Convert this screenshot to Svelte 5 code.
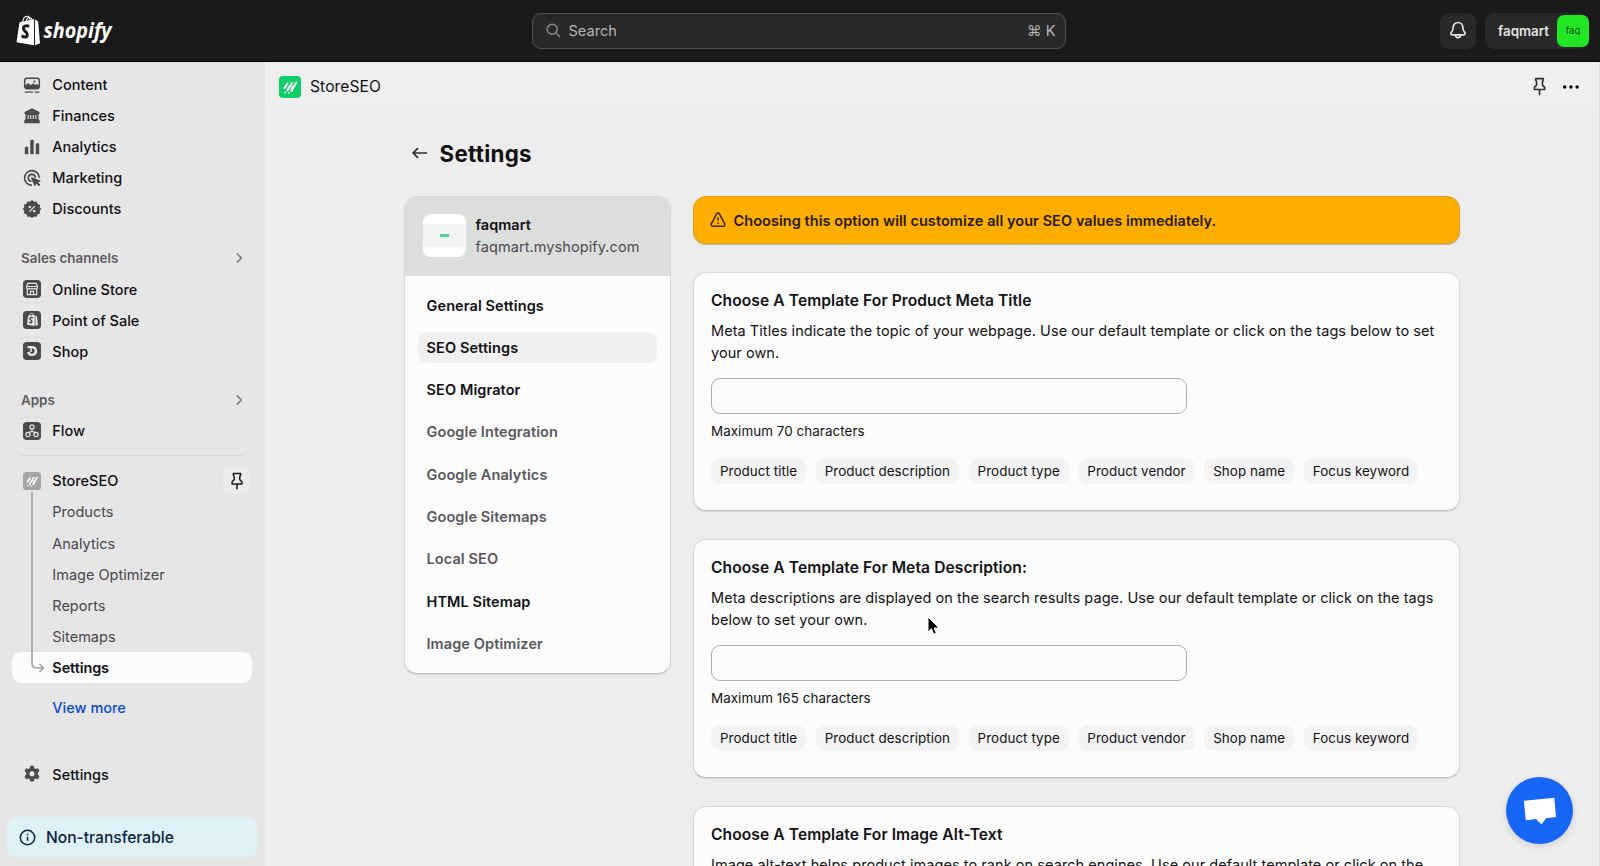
<script>
const icons = {
	content: '<rect x="1" y="1.7" width="18" height="12.800" rx="3" fill="none" stroke="currentColor" stroke-width="1.700"/><path d="M1 10.500l4.200-2.600 3 2.200 3.300-2.200 2.400 2 1.600-1 3.600 1.600v1.300a2.700 2.700 0 0 1-2.700 2.700H3.700A2.700 2.700 0 0 1 1 11.800z"/><circle cx="13" cy="5.800" r="1.300"/><path d="M1 18.700h10.500M13.500 18.700h5.500" stroke="currentColor" stroke-width="1.600"/>',
	finances: '<path d="M10 .5l8.500 4.300c1.500.800 1.100 3.200-.500 3.200v6.300c.700.300 1.500 1 1.500 2.200v2.300H.5v-2.300c0-1.200.8-1.900 1.500-2.200V8C.4 8 0 5.600 1.500 4.800z"/><path d="M5.300 8.800v5M8.400 8.800v5M11.600 8.800v5M14.700 8.800v5" stroke="#e6e6e6" stroke-width="1.300"/>',
	analytics: '<rect x="1.200" y="9.600" width="4.200" height="9.400" rx="1.500"/><rect x="7.900" y="1" width="4.200" height="18" rx="1.500"/><rect x="14.600" y="5.300" width="4.200" height="13.700" rx="1.500"/>',
	marketing: '<path d="M9 18.700A8.900 8.900 0 1 1 18.700 9M8.700 14A4.300 4.300 0 1 1 14 9" fill="none" stroke="currentColor" stroke-width="2" stroke-linecap="round"/><path d="M9.700 9.200l10.400 3.800c.6.300.5 1-.1 1.200l-2.700.9 2.900 3.100-1.900 1.800-3.100-3-1.200 2.600c-.3.600-1 .5-1.200-.1L8.900 10.100c-.2-.6.300-1.100.8-.9z"/>',
	discounts: '<path d="M10-.9l2.500 2 3.200-.3 1.100 3 3 1.100-.3 3.200L21.300 10l-1.800 2.200.3 3.200-3 1.100-1.100 3-3.200-.3L10 21l-2.500-1.800-3.200.3-1.100-3-3-1.100.3-3.200L-1.300 10l1.800-2-.3-3.200 3-1.100 1.100-3 3.200.3z"/><path d="M6.500 13.500l7-7" stroke="#e6e6e6" stroke-width="1.600"/><circle cx="7.300" cy="7.500" r="1.500" fill="#e6e6e6"/><circle cx="12.700" cy="12.500" r="1.500" fill="#e6e6e6"/>',
	store: '<rect x="-1" y="-1" width="22" height="22" rx="4.600"/><path d="M4.700 3.200h10.600l1.400 4.200v.9a1.900 1.900 0 0 1-3.400.9 2.100 2.100 0 0 1-3.300 0 2.100 2.100 0 0 1-3.300 0 1.900 1.900 0 0 1-3.400-.9v-.9zM3.500 6.900h13M4.200 10.300v6.500h11.600v-6.500M8.100 16.800v-3.900h3.800v3.900" fill="none" stroke="#e6e6e6" stroke-width="1.400"/>',
	pos: '<rect x="-1" y="-1" width="22" height="22" rx="4.600"/><path d="M5.200 5.200l8.100-1.700v13.700L3.900 15.700zM14.200 4.500l1.900.9 1.200 10.600-3.100 1z" fill="#e6e6e6"/><path d="M7 5.200c.4-4 4-4.600 4.600-.8" fill="none" stroke="#e6e6e6" stroke-width="1.100"/><path d="M11.200 7.300c-2.200-1-3.900 0-3.700 1.500.2 1.400 2.400 1.500 2.300 3.200-.1 1.600-2 1.700-3.300.7" fill="none" stroke="#4a4a4d" stroke-width="1.700"/>',
	shop: '<rect x="-1" y="-1" width="22" height="22" rx="4.600"/><path d="M4.500 5.300h5.800a4.700 4.700 0 1 1-4.800 5.800" fill="none" stroke="#e6e6e6" stroke-width="2.900"/><path d="M8.800 6.500v4.700" stroke="#e6e6e6" stroke-width="2"/>',
	flow: '<rect x="-1" y="-1" width="22" height="22" rx="4.600"/><g fill="none" stroke="#e6e6e6" stroke-width="1.500"><circle cx="10" cy="5" r="2.500"/><circle cx="5.100" cy="14.300" r="2.600"/><circle cx="14.900" cy="14.300" r="2.600"/><path d="M10 7.500v3.200M6 11.900c1.500-1.700 6.500-1.700 8 0"/></g>',
	gear: '<path fill-rule="evenodd" d="M8 0h4l.7 2.900 1.600.9 2.900-.9 2 3.500L17 8.500v2.200l2.200 2.100-2 3.500-2.900-.8-1.600.9L12 19.300H8l-.7-2.900-1.600-.9-2.900.8-2-3.500L3 10.700V8.500L.8 6.400l2-3.500 2.900.9 1.600-.9zM10 6.500a3.100 3.100 0 1 0 0 6.200 3.100 3.100 0 0 0 0-6.200z"/>',
	pin: '<path d="M6 1.800h8v1.300l-.9 2.100v3.400l2.300 2.300v2.300H4.600v-2.300l2.300-2.300V5.200L6 3.100zM10 13.500v5" fill="none" stroke="currentColor" stroke-width="1.700" stroke-linejoin="round" stroke-linecap="round"/>'
}

const main = [
	{ icon: 'content', label: 'Content' },
	{ icon: 'finances', label: 'Finances' },
	{ icon: 'analytics', label: 'Analytics' },
	{ icon: 'marketing', label: 'Marketing' },
	{ icon: 'discounts', label: 'Discounts' }
]

const channels = [
	{ icon: 'store', label: 'Online Store' },
	{ icon: 'pos', label: 'Point of Sale' },
	{ icon: 'shop', label: 'Shop' }
]

const subItems = ['Products', 'Analytics', 'Image Optimizer', 'Reports', 'Sitemaps']

const menu = [
	{ label: 'General Settings' },
	{ label: 'SEO Settings', active: true },
	{ label: 'SEO Migrator' },
	{ label: 'Google Integration', muted: true },
	{ label: 'Google Analytics', muted: true },
	{ label: 'Google Sitemaps', muted: true },
	{ label: 'Local SEO', muted: true },
	{ label: 'HTML Sitemap' },
	{ label: 'Image Optimizer', muted: true }
]

const tags = ['Product title', 'Product description', 'Product type', 'Product vendor', 'Shop name', 'Focus keyword']

const templates = [
	{
		title: 'Choose A Template For Product Meta Title',
		lines: ['Meta Titles indicate the topic of your webpage. Use our default template or click on the tags below to set', 'your own.'],
		max: 70
	},
	{
		title: 'Choose A Template For Meta Description:',
		lines: ['Meta descriptions are displayed on the search results page. Use our default template or click on the tags', 'below to set your own.'],
		max: 165
	},
	{
		title: 'Choose A Template For Image Alt-Text',
		lines: ['Image alt-text helps product images to rank on search engines. Use our default template or click on the']
	}
]
</script>

{#snippet navIcon(name)}
	<svg class="icon" viewBox="-1 -1 22 22" fill="currentColor">{@html icons[name]}</svg>
{/snippet}

{#snippet chevron()}
	<svg class="chevron" viewBox="0 0 8 12"><path d="M2 1.500L6.300 6 2 10.500" /></svg>
{/snippet}

{#snippet seoLogo()}
	<svg class="seo-logo" viewBox="0 0 22 22">
		<rect width="22" height="22" rx="4" fill="currentColor" />
		<g stroke="#fff" stroke-linecap="round" fill="none">
			<path d="M5.500 12L8.500 7.500M8.300 14.500L13 7M12.500 15L17.200 6.500" stroke-width="2" />
			<path d="M8.300 14.500L10 11M12.300 15L13.300 10.500" stroke-width="1.600" />
			<path d="M5.900 16.700h.1M10 17h.1" stroke-width="1.700" />
		</g>
	</svg>
{/snippet}

<div class="app">
	<header>
		<svg class="logo" width="100" height="34" viewBox="0 0 100 34">
			<path d="M3.500 8.200l14.500-3.200V31.200L.500 28.200z" fill="#fff" />
			<path d="M19 5.500l3.200 2L24 29.300 19 31.200z" fill="#fff" />
			<path d="M6.500 9C7 4.500 9 2.200 11 2.200s3 2 3 5M10 8c.500-3 2-4.500 3.500-4.500S16 5 16 7" fill="none" stroke="#fff" stroke-width="1.100" />
			<path d="M13.200 12.400c-3.400-1.500-6 .1-5.700 2.500.3 2.600 4 2.900 3.800 5.900-.2 2.900-3.300 2.700-5.600 1" fill="none" stroke="#1a1a1a" stroke-width="3" />
			<text x="27.500" y="23.500" textLength="68" lengthAdjust="spacingAndGlyphs">shopify</text>
		</svg>
		<div class="search">
			<svg width="15" height="15" viewBox="0 0 15 15"><circle cx="6.200" cy="6.200" r="5" /><path d="M10 10l4 4" /></svg>
			<span>Search</span>
			<kbd>⌘ K</kbd>
		</div>
		<div class="actions">
			<button class="bell" aria-label="Notifications">
				<svg width="18" height="19" viewBox="0 0 18 19"><path d="M9 1.500a4.800 4.800 0 0 0-4.800 4.800c0 3-.7 3.800-1.900 5.100-.9 1-.4 2.400.9 2.400h11.600c1.300 0 1.800-1.400.9-2.400-1.200-1.300-1.900-2.100-1.900-5.100A4.800 4.800 0 0 0 9 1.500zM6.600 14.300a2.400 2.400 0 0 0 4.800 0" /></svg>
			</button>
			<div class="user"><span>faqmart</span><i>faq</i></div>
		</div>
	</header>

	<div class="body">
		<nav>
			{#each main as item}
				<a class="row">{@render navIcon(item.icon)}{item.label}</a>
			{/each}
			<div class="heading sales">Sales channels {@render chevron()}</div>
			{#each channels as item}
				<a class="row">{@render navIcon(item.icon)}{item.label}</a>
			{/each}
			<div class="heading apps">Apps {@render chevron()}</div>
			<a class="row">{@render navIcon('flow')}Flow</a>
			<hr>
			<div class="tree">
				<a class="row store">{@render seoLogo()}StoreSEO <span class="pin">{@render navIcon('pin')}</span></a>
				{#each subItems as item}
					<a class="row sub">{item}</a>
				{/each}
				<a class="row sub current">Settings</a>
				<svg class="branch" width="16" height="184" viewBox="0 0 16 184"><path d="M2 0V171Q2 176 7 176H13M9.500 172L13.500 176 9.500 180" /></svg>
			</div>
			<a class="row sub more">View more</a>
			<a class="row bottom">{@render navIcon('gear')}Settings</a>
			<div class="plan">
				<svg width="17" height="17" viewBox="0 0 17 17"><circle cx="8.500" cy="8.500" r="7.200" /><path d="M8.500 7.700v4M8.500 4.700v1.500" /></svg>
				Non-transferable
			</div>
		</nav>

		<main>
			<div class="titlebar">
				{@render seoLogo()}
				<span>StoreSEO</span>
				<div class="tools">
					{@render navIcon('pin')}
					<svg width="18" height="4" viewBox="0 0 18 4"><circle cx="2.700" cy="2" r="1.700" /><circle cx="8.900" cy="2" r="1.700" /><circle cx="15.100" cy="2" r="1.700" /></svg>
				</div>
			</div>

			<div class="page">
				<h1>
					<svg width="16" height="12" viewBox="0 0 16 12"><path d="M15 6H1.500M6 1.200L1.200 6 6 10.800" /></svg>
					Settings
				</h1>
				<div class="columns">
					<aside class="card">
						<div class="shop">
							<div class="thumb"><div><b></b></div></div>
							<div>
								<strong>faqmart</strong>
								<p>faqmart.myshopify.com</p>
							</div>
						</div>
						<ul>
							{#each menu as item}
								<li class:active={item.active} class:muted={item.muted}>{item.label}</li>
							{/each}
						</ul>
					</aside>

					<section>
						<div class="banner">
							<svg width="16" height="16" viewBox="0 0 16 16"><path d="M6.600 1.900a1.600 1.600 0 0 1 2.800 0l5.200 9.700c.7 1.300 0 2.700-1.400 2.700H2.800c-1.400 0-2.100-1.400-1.400-2.700zM8 5.200v3.600M8 10.600v1.500" /></svg>
							<span>Choosing this option will customize all your SEO values immediately.</span>
						</div>
						{#each templates as template}
							<div class="card template">
								<h2>{template.title}</h2>
								<div class="text">
									{#each template.lines as line}
										<p>{line}</p>
									{/each}
								</div>
								{#if template.max}
									<input type="text" aria-label={template.title}>
									<small>Maximum {template.max} characters</small>
									<div class="tags">
										{#each tags as tag}
											<span>{tag}</span>
										{/each}
									</div>
								{/if}
							</div>
						{/each}
					</section>
				</div>
			</div>
		</main>
	</div>

	<button class="chat" aria-label="Chat">
		<svg width="34" height="28" viewBox="0 0 34 28"><path d="M.800 3.700L31.300.800 33 20 23 21.200 18.500 27.500 13 22 2.800 23.300z" fill="#fff" /></svg>
	</button>
	<svg class="cursor" width="13" height="20" viewBox="0 0 13 20"><path d="M1 1v15l3.500-3.200 2.200 5.400 2.600-1.100L7.100 12H12z" fill="#000" stroke="#fff" /></svg>
</div>

<style>
	:global(body) {
		background: #ededed;
		overflow: hidden;
	}

	.app {
		position: relative;
		height: 866px;
		overflow: hidden;
		display: flex;
		flex-direction: column;
		font-family: Inter, "Noto Sans", sans-serif;
		font-size: 14.5px;
		color: #111113;
	}

	header {
		flex: none;
		height: 62px;
		box-sizing: border-box;
		border-bottom: 1px solid #000;
		background: #1a1a1a;
		display: grid;
		grid-template-columns: 1fr 534px 1fr;
		align-items: center;
		padding: 0 11px 0 16px;
	}

	.logo {
		overflow: visible;
	}

	.logo text {
		font: italic bold 22px "Open Sans", sans-serif;
		fill: #fff;
	}

	.search {
		height: 36px;
		box-sizing: border-box;
		margin: 0 4px 0 -4px;
		border: 1px solid #505050;
		border-radius: 9px;
		background: #292929;
		color: #b5b5b5;
		display: flex;
		align-items: center;
		padding: 0 9px 0 13px;
		letter-spacing: .05px;
	}

	.search svg {
		margin-right: 8px;
		fill: none;
		stroke: #8a8a8a;
		stroke-width: 1.5;
	}

	kbd {
		margin-left: auto;
		font: inherit;
	}

	.actions {
		display: flex;
		justify-content: flex-end;
		gap: 9px;
	}

	button {
		border: 0;
		padding: 0;
		display: grid;
		place-items: center;
	}

	.bell, .user {
		height: 36px;
		border-radius: 9px;
		background: #292929;
	}

	.bell {
		width: 36px;
	}

	.bell svg {
		fill: none;
		stroke: #e3e3e3;
		stroke-width: 1.7;
	}

	.user {
		display: flex;
		align-items: center;
		justify-content: space-between;
		width: 104px;
		box-sizing: border-box;
		padding: 0 0 0 13px;
		color: #e3e3e3;
		font-size: 13.4px;
		font-weight: 600;
	}

	.user i {
		width: 32px;
		height: 32px;
		line-height: 32px;
		border-radius: 7px;
		background: #22e523;
		color: #0c5010;
		font-style: normal;
		font-weight: 400;
		font-size: 9.5px;
		text-align: center;
	}

	.body {
		flex: 1;
		min-height: 0;
		display: flex;
	}

	nav {
		flex: none;
		width: 265px;
		box-sizing: border-box;
		background: #e6e6e6;
		padding: 7px 13px 9px 12px;
		display: flex;
		flex-direction: column;
	}

	.row {
		flex: none;
		height: 31.1px;
		display: flex;
		align-items: center;
		padding-left: 7px;
		font-weight: 500;
	}

	.icon {
		flex: none;
		overflow: visible;
		color: #4a4a4d;
	}

	.row .icon {
		width: 18px;
		height: 18px;
		margin: 0 11.3px 0 4px;
	}

	.heading {
		height: 31px;
		display: flex;
		align-items: center;
		justify-content: space-between;
		padding: 0 9px;
		color: #5c5c60;
		font-size: 13.4px;
		font-weight: 600;
	}

	.sales {
		margin-top: 18px;
	}

	.apps {
		margin-top: 17.5px;
	}

	.chevron {
		width: 8px;
		height: 12px;
		fill: none;
		stroke: #77777a;
		stroke-width: 1.5;
	}

	hr {
		width: 222px;
		border: 0;
		border-top: 1px solid #d6d6d8;
		margin: 9px 0 9px 9px;
	}

	.tree {
		position: relative;
	}

	.store .seo-logo {
		color: #a5a5a5;
		width: 18px;
		height: 18px;
		margin: 0 11.3px 0 4px;
	}

	.pin {
		margin: 0 2px 0 auto;
		width: 27px;
		height: 27px;
		border-radius: 8px;
		background: #ebebeb;
		display: grid;
		place-items: center;
	}

	.row .pin .icon {
		width: 20px;
		height: 20px;
		margin: 0;
		color: #1c1c1e;
	}

	.sub {
		padding-left: 40.3px;
		font-weight: 400;
		color: #48484b;
	}

	.current {
		background: #fcfcfc;
		border-radius: 9px;
		color: #111113;
		font-weight: 600;
		letter-spacing: -.1px;
	}

	.branch {
		position: absolute;
		left: 18px;
		top: 27px;
		fill: none;
		stroke: #a5a5a8;
		stroke-width: 1.7;
	}

	.more {
		margin-top: 9px;
		color: #0a47cf;
		font-weight: 500;
	}

	.bottom {
		margin-top: auto;
	}

	.plan {
		flex: none;
		height: 40px;
		margin: 27px -5px 0;
		border-radius: 9px;
		background: #e0f0f7;
		color: #0a2340;
		display: flex;
		align-items: center;
		gap: 10px;
		padding-left: 12px;
		font-size: 15.6px;
		font-weight: 500;
	}

	.plan svg {
		fill: none;
		stroke: #0a2340;
		stroke-width: 1.5;
	}

	main {
		flex: 1;
		min-width: 0;
		background: #ededed;
		border-right: 1px solid #dcdfe0;
	}

	.titlebar {
		height: 48px;
		box-sizing: border-box;
		background: #efefef;
		display: flex;
		align-items: center;
		gap: 9px;
		padding: 1px 19px 0 14px;
		font-size: 15.6px;
		letter-spacing: .1px;
	}

	.titlebar .seo-logo {
		width: 22px;
		height: 22px;
		color: #10cf6b;
	}

	.tools {
		margin-left: auto;
		display: flex;
		align-items: center;
		gap: 12px;
	}

	.tools .icon {
		width: 21px;
		height: 21px;
		color: #303030;
	}

	.page {
		width: 1056px;
		margin-left: 139px;
		padding-top: 28px;
	}

	h1 {
		margin: 0 0 28px 8px;
		height: 30px;
		display: flex;
		align-items: center;
		gap: 11.5px;
		font-size: 22.3px;
		font-weight: 650;
		letter-spacing: .3px;
	}

	h1 svg {
		fill: none;
		stroke: #303030;
		stroke-width: 1.7;
	}

	.columns {
		display: flex;
		align-items: flex-start;
		gap: 22px;
	}

	.card {
		box-sizing: border-box;
		border: 1px solid #d6d8d9;
		border-bottom-color: #bcc2c4;
		border-radius: 13px;
		background: #fcfcfc;
		box-shadow: 0 1px 1px #d3d6d7;
	}

	aside {
		flex: none;
		width: 267px;
		height: 478px;
		overflow: hidden;
	}

	.shop {
		height: 78.5px;
		box-sizing: border-box;
		background: #dcdddd;
		display: flex;
		gap: 9.5px;
		padding: 17px 0 0 18px;
		line-height: 22px;
	}

	.shop strong {
		font-weight: 600;
	}

	p {
		margin: 0;
	}

	.shop p {
		color: #4c4c4f;
		letter-spacing: .08px;
	}

	.thumb {
		width: 43px;
		height: 43px;
		border-radius: 8px;
		background: #fff;
		display: grid;
		align-items: center;
	}

	.thumb div {
		height: 23px;
		background: #f3f5f5;
		display: grid;
		place-items: center;
	}

	.thumb b {
		width: 9px;
		height: 3px;
		background: #55d391;
	}

	ul {
		list-style: none;
		margin: 0;
		padding: 14px 13px;
		display: flex;
		flex-direction: column;
		gap: 11.3px;
	}

	li {
		height: 31px;
		line-height: 31px;
		padding-left: 8.5px;
		border-radius: 9px;
		font-weight: 600;
		letter-spacing: .1px;
	}

	.active {
		background: #f0f0f0;
	}

	.muted {
		color: #58585b;
	}

	section {
		flex: 1;
		min-width: 0;
		display: flex;
		flex-direction: column;
		gap: 28px;
	}

	.banner {
		height: 48px;
		box-sizing: border-box;
		border: 1px solid #dba022;
		border-radius: 13px;
		background: #ffae00;
		box-shadow: 0 1px 1px #c5b48a;
		display: flex;
		align-items: center;
		gap: 7.5px;
		padding-left: 16px;
		color: #271a00;
		font-weight: 600;
		letter-spacing: .06px;
	}

	.banner svg {
		fill: none;
		stroke: #3d2a00;
		stroke-width: 1.5;
	}

	.template {
		height: 239px;
		padding: 17px 17px 15px;
		display: flex;
		flex-direction: column;
		align-items: flex-start;
	}

	h2 {
		margin: 0;
		font-size: 15.6px;
		line-height: 22px;
		font-weight: 600;
		letter-spacing: .08px;
	}

	.text {
		margin-top: 8px;
		line-height: 22.3px;
		letter-spacing: .055px;
		white-space: nowrap;
	}

	input {
		width: 476px;
		height: 36px;
		margin: 13px 0 8px;
		box-sizing: border-box;
		border: 1px solid #a9afb1;
		border-radius: 9px;
		background: #fcfcfc;
	}

	small {
		font-size: 13.4px;
		line-height: 18px;
		letter-spacing: .06px;
	}

	.tags {
		display: flex;
		gap: 9.5px;
		margin-top: 18px;
	}

	.tags span {
		height: 26px;
		line-height: 26px;
		padding: 0 9px;
		border-radius: 9px;
		background: #f3f3f3;
		font-size: 13.4px;
		letter-spacing: .06px;
	}

	.chat {
		position: absolute;
		right: 27px;
		bottom: 22px;
		width: 67px;
		height: 67px;
		border-radius: 50%;
		background: #1766f5;
		box-shadow: 0 2px 7px rgba(0, 0, 0, .12);
	}

	.cursor {
		position: absolute;
		left: 927px;
		top: 616px;
	}
</style>
